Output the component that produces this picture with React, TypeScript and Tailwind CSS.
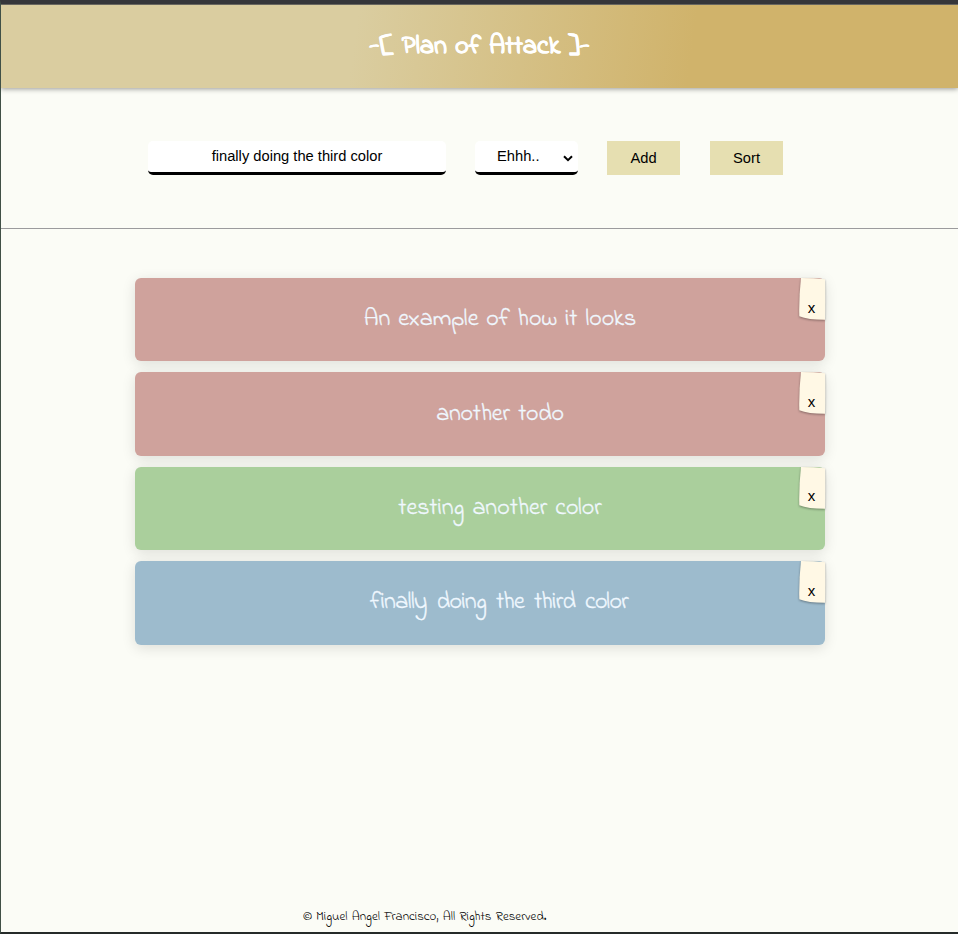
import { useState } from "react";

type Todo = { text: string; color: string; fit: string };

const hand = "font-['Indie_Flower','Open_Sans',sans-serif] [font-variant-ligatures:none]";

const initialTodos: Todo[] = [
  { text: "An example of how it looks", color: "bg-[#cfa29c]", fit: "[word-spacing:1.8px]" },
  { text: "another todo", color: "bg-[#cfa29c]", fit: "top-px tracking-[-0.2px] [word-spacing:2.7px]" },
  { text: "testing another color", color: "bg-[#aacf9c]", fit: "top-px [word-spacing:2px]" },
  { text: "finally doing the third color", color: "bg-[#9dbbcd]", fit: "-left-px tracking-[-0.7px] [word-spacing:4.6px]" },
];

function DeleteTag({ onClick }: { onClick: () => void }) {
  return (
    <button
      onClick={onClick}
      aria-label="Delete"
      className="absolute top-0 right-[-1px] h-[42px] w-[27px] text-[15px] text-black"
    >
      <svg
        viewBox="0 0 27 42"
        className="absolute inset-0 h-[42px] w-[27px] overflow-visible drop-shadow-[0_1px_1px_rgba(0,0,0,0.35)]"
      >
        <path d="M2 0 Q15 0 26 1.2 Q26.5 20 26 41.7 Q9 41.7 .3 38.2 Q-.2 20 2 0Z" fill="#fff8e5" />
      </svg>
      <span className="relative top-[8.8px] -left-px font-['Liberation_Sans',Arial,sans-serif]">x</span>
    </button>
  );
}

export default function App() {
  const [todos, setTodos] = useState(initialTodos);
  const [value, setValue] = useState("finally doing the third color");

  return (
    <div className="flex h-[934px] w-full flex-col overflow-hidden border-t-4 border-b-2 border-l border-t-[#35363a] border-b-[#252b29] border-l-[#405046] bg-[#fbfcf6] font-['Liberation_Sans',Arial,sans-serif] text-black">
      <header className="flex h-[84px] shrink-0 items-center justify-center border-t border-[#68665f] bg-[linear-gradient(98deg,#dacda0_0%,#dacda0_37%,#d0b36b_72%,#d0b36b_100%)] shadow-[0_1px_5px_rgba(0,0,0,0.4)]">
        <h1 className={`${hand} pt-[2px] text-[26.3px] leading-none font-bold text-white [-webkit-text-stroke:0.3px_white] [word-spacing:1.5px]`}>
          -[ Plan of Attack ]-
        </h1>
      </header>

      <form
        className="flex h-[141px] shrink-0 items-start border-b border-[#9b9b9d] pt-[53px] pl-[147px] text-[14.7px]"
        onSubmit={(e) => e.preventDefault()}
      >
        <input
          value={value}
          onChange={(e) => setValue(e.target.value)}
          className="h-[34px] w-[298px] rounded-[5px] border-b-[3px] border-black bg-white pb-[2px] text-center outline-none"
        />
        <div className="relative ml-[29px] h-[34px] w-[103px]">
          <select className="h-[34px] w-[103px] appearance-none rounded-[5px] border-b-[3px] border-black bg-white pl-[22px] outline-none">
            <option>Ehhh..</option>
          </select>
          <svg viewBox="0 0 10 7" className="pointer-events-none absolute top-[14px] right-[5px] h-[7px] w-[10px]">
            <path d="M1 1.2 L5 5.2 L9 1.2" fill="none" stroke="black" strokeWidth="2" />
          </svg>
        </div>
        <button className="ml-[29px] h-[34px] w-[73px] bg-[#e6dfb1]">Add</button>
        <button className="ml-[30px] h-[34px] w-[73px] bg-[#e6dfb1]">Sort</button>
      </form>

      <main className="ml-[134px] flex w-[690px] flex-1 flex-col gap-[11px] pt-[49px]">
        {todos.map((t, i) => (
          <div
            key={t.text}
            className={`relative flex h-[83.4px] shrink-0 items-center justify-center rounded-[6px] pl-[40px] shadow-[0_3px_14px_rgba(0,0,0,0.12)] ${t.color}`}
          >
            <span
              className={`${hand} ${t.fit} relative text-[24px] leading-none whitespace-nowrap text-[#f0f8ff] [-webkit-text-stroke:0.3px_#f0f8ff]`}
            >
              {t.text}
            </span>
            <DeleteTag onClick={() => setTodos(todos.filter((_, j) => j !== i))} />
          </div>
        ))}
      </main>

      <footer className={`${hand} flex h-8 shrink-0 items-center pt-px pl-[302px] text-[13px] text-black [word-spacing:1px]`}>
        <span>© Miguel Angel Francisco, All Rights Reserved.</span>
      </footer>
    </div>
  );
}
